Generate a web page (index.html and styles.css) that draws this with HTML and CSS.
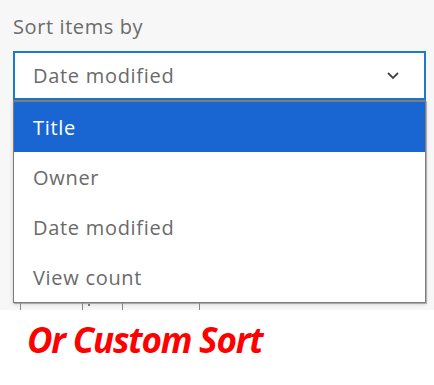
FILE: index.html
```html
<!DOCTYPE html>
<html>
<head>
<meta charset="utf-8">
<link rel="stylesheet" href="styles.css">
</head>
<body>
<div class="panel">
  <div class="label">Sort items by</div>
  <div class="select">
    <span class="value">Date modified</span>
    <svg class="chev" width="14" height="9" viewBox="0 0 14 9"><path d="M2 2 L7 7 L12 2" fill="none" stroke="#444" stroke-width="1.8"/></svg>
  </div>
  <div class="dropdown">
    <ul class="list">
      <li class="item active">Title</li>
      <li class="item">Owner</li>
      <li class="item">Date modified</li>
      <li class="item">View count</li>
    </ul>
    <div class="under">
      <span class="cell c1"></span>
      <span class="cell c2"><span class="dot"></span></span>
      <span class="cell c3"></span>
      <span class="cell c4"></span>
    </div>
  </div>
</div>
<div class="caption">Or Custom Sort</div>
</body>
</html>
```
FILE: styles.css
```css
html, body { margin: 0; padding: 0; background: #ffffff; }
body { font-family: "Open Sans", "Noto Sans", sans-serif; }
.panel {
  background: #f7f7f7;
  height: 310px;
  padding: 14px 8px 0 13px;
  box-sizing: border-box;
}
.label {
  font-size: 20px;
  line-height: 26px;
  letter-spacing: 0.6px;
  color: #6b6b6b;
}
.select {
  margin-top: 11px;
  width: 413px;
  height: 49px;
  box-sizing: border-box;
  border: 2px solid #1c79cc;
  background: #fff;
  display: flex;
  align-items: center;
  justify-content: space-between;
  padding: 0 24px 0 18px;
  font-size: 20px;
  letter-spacing: 0.7px;
  color: #6a6a6a;
}
.chev { display: block; }
.dropdown { width: 413px; }
.list {
  list-style: none;
  margin: 0;
  padding: 0;
  background: #fff;
  border: 1px solid #7d7d7d;
  border-top-width: 2px;
  box-shadow: 0 1px 4px rgba(0,0,0,0.18), 1px 1px 0 #bdbdbd;
}
.item {
  height: 50px;
  display: flex;
  align-items: center;
  padding-left: 19px;
  font-size: 20px;
  letter-spacing: 0.7px;
  color: #6a6a6a;
}
.item.active {
  background: #1966d2;
  color: #fff;
}
.under {
  display: flex;
  height: 7px;
  padding-left: 7px;
}
.cell { border-left: 1px solid #8a8a8a; height: 7px; position: relative; }
.c1 { width: 61px; }
.c2 { width: 39px; }
.c3 { width: 76px; }
.c4 { width: 40px; }
.dot {
  position: absolute;
  left: 5px;
  top: 1px;
  width: 2px;
  height: 2px;
  background: #777;
}
.caption {
  padding: 8px 0 0 27px;
  font-family: "Open Sans", sans-serif;
  font-weight: 700;
  font-style: italic;
  font-size: 35px;
  letter-spacing: -1.2px;
  color: #ff0000;
  line-height: 44px;
}
```
